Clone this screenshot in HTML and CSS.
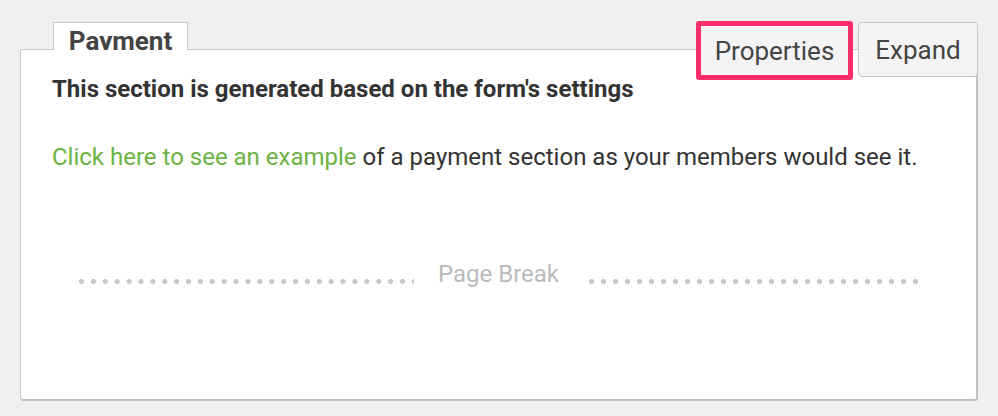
FILE: index.html
```html
<!DOCTYPE html>
<html>
<head>
<meta charset="utf-8">
<link rel="stylesheet" href="styles.css">
</head>
<body>
<div class="section">
  <div class="head">
    <div class="tab">Payment</div>
    <div class="actions">
      <button class="btn btn-highlight">Properties</button>
      <button class="btn">Expand</button>
    </div>
  </div>
  <div class="card">
    <p class="lead">This section is generated based on the form's settings</p>
    <p class="desc"><a class="link" href="#">Click here to see an example</a> of a payment section as your members would see it.</p>
    <div class="page-break">
      <span class="pb-line pb-left"></span>
      <span class="pb-label">Page Break</span>
      <span class="pb-line pb-right"></span>
    </div>
  </div>
</div>
</body>
</html>
```

FILE: styles.css
```css
html, body {
  margin: 0;
  padding: 0;
  background: #f0f0f0;
  font-family: Roboto, "Noto Sans", sans-serif;
  color: #333;
}

.section {
  margin: 21px 20px 0 20px;
  width: 958px;
}

.head {
  position: relative;
  z-index: 1;
  display: flex;
  align-items: flex-start;
  height: 28px;
}

.tab {
  margin: 1px 0 0 33px;
  box-sizing: border-box;
  width: 135px;
  height: 28px;
  overflow: hidden;
  background: #fff;
  border: 1px solid #c8c8c8;
  border-bottom: none;
  font-weight: 700;
  font-size: 26px;
  color: #444;
  text-align: center;
  line-height: 36px;
}

.actions {
  margin-left: auto;
  display: flex;
  align-items: flex-start;
  gap: 5px;
}

.btn {
  box-sizing: border-box;
  margin-top: 1px;
  height: 55px;
  width: 120px;
  padding: 0;
  background: #f4f4f4;
  border: 1px solid #c6c6c6;
  border-radius: 4px;
  font-family: Roboto, "Noto Sans", sans-serif;
  font-size: 26px;
  color: #444;
}

.btn-highlight {
  margin-top: 0;
  width: 157px;
  height: 59px;
  border: 5px solid #ff2d6b;
  border-radius: 3px;
}

.card {
  box-sizing: border-box;
  height: 352px;
  background: #fff;
  border: 1px solid #c8c8c8;
  border-right: 2px solid #c2c2c2;
  border-bottom: 2px solid #c2c2c2;
  border-radius: 3px;
  padding: 23px 31px 0 31px;
}

.lead {
  margin: 0;
  font-weight: 700;
  font-size: 24px;
  line-height: 32px;
  color: #333;
}

.desc {
  margin: 36px 0 0 0;
  font-size: 24px;
  line-height: 32px;
  color: #333;
}

.link {
  color: #6bb344;
  text-decoration: none;
}

.page-break {
  margin: 86px 27px 0 27px;
  display: flex;
  align-items: flex-start;
}

.pb-line {
  flex: 1;
  height: 5px;
  margin-top: 20px;
  background-repeat: repeat-x;
}

.pb-left {
  background-image: radial-gradient(circle at 2.5px 50%, #c8c8c8 2.3px, transparent 2.8px);
  background-size: 11.9px 5px;
  background-position: left center;
}

.pb-right {
  background-image: radial-gradient(circle at 9.5px 50%, #c8c8c8 2.3px, transparent 2.8px);
  background-size: 12px 5px;
  background-position: right center;
}

.pb-label {
  padding: 0 24px;
  font-size: 24px;
  color: #bbb;
  line-height: 30px;
}
```
